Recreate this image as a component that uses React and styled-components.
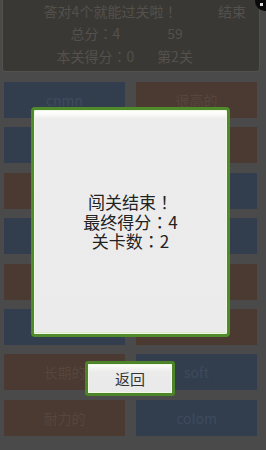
import React from "react";
import styled, { createGlobalStyle } from "styled-components";

const Global = createGlobalStyle`
  html, body { margin: 0; padding: 0; }
  body {
    width: 266px; height: 450px; overflow: hidden;
    background: #4a4a4a;
    font-family: "Roboto", "Noto Sans CJK SC", sans-serif;
  }
`;

const Page = styled.div`
  position: relative;
  width: 266px;
  height: 450px;
  background: #4a4a4a;
  overflow: hidden;
`;

const Header = styled.div`
  margin: 0 6px 0 2px;
  height: 72px;
  box-sizing: border-box;
  background: #3a3834;
  border: 1px solid #53514d;
  border-top: none;
  border-radius: 0 0 4px 4px;
  color: #54514c;
  font-size: 14px;
  font-family: "Noto Sans CJK SC", sans-serif;
`;

const TopRow = styled.div`
  display: flex;
  height: 22px;
  line-height: 22px;
`;

const Title = styled.div`
  width: 215px;
  text-align: center;
`;

const EndBtn = styled.div``;

const StatRow = styled.div`
  display: grid;
  grid-template-columns: 79px 80px;
  padding-left: 53px;
  height: 22px;
  line-height: 22px;
  margin-top: ${(p) => p.$mt || 0}px;
  & > div { text-align: center; }
`;

const Punct = styled.span`
  font-family: "Noto Sans CJK JP", sans-serif;
`;

const Grid = styled.div`
  display: grid;
  grid-template-columns: 121px 121px;
  grid-auto-rows: 36px;
  column-gap: 11px;
  row-gap: 9.4px;
  padding: 10px 0 0 4px;
`;

const Tile = styled.div`
  background: ${(p) => (p.$c === "b" ? "#323e4d" : "#4a3a32")};
  color: ${(p) => (p.$c === "b" ? "#3d4b5f" : "#58453b")};
  display: flex;
  align-items: center;
  justify-content: center;
  font-size: 14px;
  font-family: "Noto Sans CJK SC", sans-serif;
`;

const Overlay = styled.div`
  position: absolute;
  inset: 0;
`;

const Dialog = styled.div`
  position: absolute;
  left: 31px;
  top: 107px;
  width: 199px;
  height: 230px;
  box-sizing: border-box;
  border: 3px solid #4f8a2b;
  border-radius: 4px;
  background: linear-gradient(#ffffff 0px, #fbfbfa 4px, #ececec 9px, #ebebeb 100%);
  box-shadow: inset 0 0 0 1px #eef8e2, inset 0 -2px 0 #d8e8c8;
  display: flex;
  flex-direction: column;
  align-items: center;
  justify-content: center;
  color: #222;
  font-size: 17px;
  font-family: "Noto Sans CJK SC", sans-serif;
  padding-bottom: 1px;
`;

const Line = styled.div`
  height: 19.5px;
  line-height: 19.5px;
  white-space: nowrap;
`;

const BackBtn = styled.div`
  position: absolute;
  left: 85px;
  top: 361px;
  width: 90px;
  height: 35px;
  box-sizing: border-box;
  border: 3px solid #4d8329;
  border-radius: 3px;
  background: linear-gradient(#ffffff 0px, #f4f4f2 4px, #ebebeb 8px, #e9e9e9 100%);
  box-shadow: inset 0 0 0 1px #eef8e2;
  display: flex;
  align-items: center;
  justify-content: center;
  color: #333;
  font-size: 15px;
  font-family: "Noto Sans CJK SC", sans-serif;
`;

const Corner = styled.div`
  position: absolute;
  right: -9px;
  top: -9px;
  width: 20px;
  height: 20px;
  border-radius: 50%;
  background: #0a0a0a;
  &::after {
    content: "";
    position: absolute;
    left: 5px;
    bottom: 5px;
    width: 3px;
    height: 3px;
    background: #ddd;
  }
`;

const tiles = [
  ["b", "cnmn"], ["r", "很高的"],
  ["b", ""], ["r", ""],
  ["r", ""], ["b", ""],
  ["b", ""], ["b", ""],
  ["r", ""], ["r", ""],
  ["b", ""], ["r", ""],
  ["r", "长期的"], ["b", "soft"],
  ["r", "耐力的"], ["b", "colom"],
];

export default function App() {
  return (
    <>
      <Global />
      <Page>
        <Header>
          <TopRow>
            <Title>答对4个就能过关啦<Punct>！</Punct></Title>
            <EndBtn>结束</EndBtn>
          </TopRow>
          <StatRow>
            <div>总分<Punct>：</Punct>4</div>
            <div>59</div>
          </StatRow>
          <StatRow $mt={1}>
            <div>本关得分<Punct>：</Punct>0</div>
            <div>第2关</div>
          </StatRow>
        </Header>
        <Grid>
          {tiles.map(([c, t], i) => (
            <Tile key={i} $c={c}>{t}</Tile>
          ))}
        </Grid>
        <Corner />
        <Overlay>
          <Dialog>
            <Line>闯关结束<Punct>！</Punct></Line>
            <Line>最终得分<Punct>：</Punct>4</Line>
            <Line>关卡数<Punct>：</Punct>2</Line>
          </Dialog>
          <BackBtn>返回</BackBtn>
        </Overlay>
      </Page>
    </>
  );
}
